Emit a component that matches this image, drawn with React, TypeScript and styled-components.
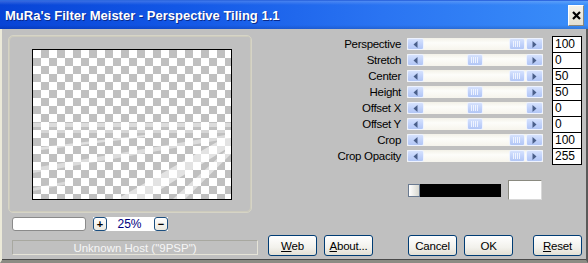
import styled, { createGlobalStyle } from 'styled-components';

const GlobalStyle = createGlobalStyle`
  html, body {
    margin: 0;
    padding: 0;
    background: #c0c0c0;
  }
  body {
    font-family: 'Liberation Sans', Arial, sans-serif;
    font-size: 11px;
  }
`;

const Window = styled.div`
  width: 588px;
  height: 263px;
  display: flex;
  flex-direction: column;
  overflow: hidden;
  background: #c0c0c0;
`;

const TitleBar = styled.div`
  height: 29px;
  flex: none;
  display: flex;
  align-items: center;
  padding: 0 4px 0 5px;
  box-sizing: border-box;
  background:
    linear-gradient(to bottom, rgba(255, 255, 255, 0.18) 0, rgba(255, 255, 255, 0) 4px,
      rgba(0, 0, 0, 0) 24px, rgba(0, 0, 40, 0.15) 100%),
    linear-gradient(to right, #0844d6 0%, #1257e6 30%, #2a74f2 65%, #3a8ef9 100%);
  border-top: 1px solid #2f69e0;
`;

const Title = styled.span`
  flex: 1;
  color: #fff;
  font-weight: bold;
  font-size: 13px;
  text-shadow: 1px 1px 0 #0a2a8a;
  white-space: nowrap;
`;

const CloseButton = styled.div`
  width: 16px;
  height: 21px;
  box-sizing: border-box;
  display: flex;
  align-items: center;
  justify-content: center;
  background: linear-gradient(#f4f2ea, #e3e0d2);
  border: 1px solid #fff;
  border-right-color: #8a877a;
  border-bottom-color: #8a877a;
  svg {
    display: block;
  }
`;

const Body = styled.div`
  flex: 1;
  display: flex;
  gap: 10px;
  padding: 6px 4px 4px 6px;
  border-left: 2px solid #ecead9;
  border-right: 2px solid #5a5a5a;
  border-bottom: 3px solid #8c8c84;
  box-shadow: inset 0 -1px 0 #4a4a4a;
`;

const LeftColumn = styled.div`
  width: 250px;
  display: flex;
  flex-direction: column;
`;

const PreviewFrame = styled.div`
  width: 244px;
  height: 178px;
  box-sizing: border-box;
  border: 1px solid #d6d4c6;
  border-radius: 5px;
  box-shadow: inset 1px 1px 0 #cdcbbd, inset -1px -1px 0 #cdcbbd;
  padding: 13px 0 0 23px;
`;

const Checker = styled.div`
  position: relative;
  width: 200px;
  height: 151px;
  box-sizing: border-box;
  border: 1px solid #000;
  background: conic-gradient(#c0c0c0 25%, #fff 0 50%, #c0c0c0 0 75%, #fff 0) 0 0 / 16px 16px;
  svg {
    position: absolute;
    left: 0;
    top: 0;
  }
`;

const ZoomRow = styled.div`
  margin-top: 4px;
  margin-left: 4px;
  display: flex;
  align-items: center;
  height: 14px;
`;

const NameField = styled.div`
  width: 74px;
  height: 14px;
  box-sizing: border-box;
  background: #fff;
  border: 1px solid #8a8a8a;
  border-radius: 3px;
`;

const ZoomBox = styled.div`
  margin-left: 7px;
  width: 75px;
  height: 14px;
  background: #fff;
  display: flex;
  align-items: center;
`;

const TinyButton = styled.div`
  width: 14px;
  height: 14px;
  box-sizing: border-box;
  border: 1px solid #1c4f80;
  border-radius: 3px;
  background: linear-gradient(#fff, #ebe9df);
  display: flex;
  align-items: center;
  justify-content: center;
  font-weight: bold;
  font-size: 11px;
  line-height: 1;
  color: #000;
`;

const ZoomValue = styled.span`
  flex: 1;
  text-align: center;
  color: #000080;
  font-size: 12px;
  padding-right: 2px;
`;

const Status = styled.div`
  margin-top: 9px;
  margin-left: 4px;
  width: 246px;
  height: 15px;
  box-sizing: border-box;
  border: 1px solid #e6e4d8;
  border-top-color: #a8a8a0;
  border-left-color: #a8a8a0;
  color: #f6f6f6;
  font-size: 11.5px;
  display: flex;
  align-items: center;
  justify-content: center;
`;

const RightColumn = styled.div`
  width: 314px;
  display: flex;
  flex-direction: column;
`;

const Sliders = styled.div`
  margin-top: 1px;
  display: flex;
  flex-direction: column;
`;

const SliderRow = styled.div`
  height: 16px;
  display: flex;
  align-items: center;
`;

const Label = styled.span`
  width: 133px;
  text-align: right;
  font-size: 11.5px;
  letter-spacing: -0.3px;
  color: #000;
  margin-right: 6px;
  white-space: nowrap;
`;

const Track = styled.div<{ $pos: 'mid' | 'end' }>`
  width: 136px;
  height: 12px;
  display: flex;
  background: linear-gradient(#f3f1e8, #fdfdfa 40%, #f6f4ec);
  .inner {
    flex: 1;
    display: flex;
    justify-content: ${(p) => (p.$pos === 'end' ? 'flex-end' : 'center')};
    padding-right: ${(p) => (p.$pos === 'end' ? '1px' : '0')};
  }
`;

const ScrollPart = styled.div<{ $w: number }>`
  width: ${(p) => p.$w}px;
  height: 12px;
  box-sizing: border-box;
  border: 1px solid #eef3ff;
  border-radius: 2px;
  background: linear-gradient(#d6e2fd, #c2d3fb 50%, #b2c6f5);
  display: flex;
  align-items: center;
  justify-content: center;
`;

const ValueBox = styled.div`
  margin-left: 9px;
  width: 30px;
  height: 17px;
  align-self: flex-start;
  box-sizing: border-box;
  border: 1px solid #000;
  background: #fff;
  font-size: 12px;
  line-height: 15px;
  padding-left: 2px;
  margin-bottom: -1px;
`;

const ColorRow = styled.div`
  margin-top: 16px;
  margin-left: 140px;
  display: flex;
  align-items: center;
  height: 20px;
`;

const Gradient = styled.div`
  width: 93px;
  height: 13px;
  background: #000;
  display: flex;
`;

const GradientStop = styled.div`
  width: 12px;
  height: 13px;
  box-sizing: border-box;
  border: 1px solid #6a7a90;
  background: linear-gradient(to right, #fff, #d8d8d0);
`;

const Swatch = styled.div`
  margin-left: 7px;
  width: 34px;
  height: 20px;
  box-sizing: border-box;
  background: #fff;
  border: 1px solid #d8d8d8;
  border-top-color: #8a8a80;
  border-left-color: #8a8a80;
`;

const Buttons = styled.div`
  margin-top: auto;
  display: flex;
  gap: 7px;
`;

const Button = styled.div<{ $gap?: number }>`
  width: 50px;
  height: 21px;
  margin-left: ${(p) => p.$gap ?? 0}px;
  box-sizing: border-box;
  border: 1px solid #003c74;
  border-radius: 3px;
  background: linear-gradient(#ffffff, #f2f1ec 60%, #e2dfd4);
  display: flex;
  align-items: center;
  justify-content: center;
  font-size: 11.5px;
  letter-spacing: -0.2px;
  color: #000;
  u {
    text-decoration: underline;
  }
`;

const Tri = ({ dir }: { dir: 'l' | 'r' }) => (
  <svg width="5" height="7" viewBox="0 0 5 7">
    <path d={dir === 'l' ? 'M4.5 0 L0.5 3.5 L4.5 7 Z' : 'M0.5 0 L4.5 3.5 L0.5 7 Z'} fill="#4a5f8a" />
  </svg>
);

const Grip = () => (
  <svg width="8" height="6" viewBox="0 0 8 6">
    {[0, 2, 4, 6].map((x) => (
      <rect key={x} x={x} y="0" width="1" height="6" fill="#eef3ff" />
    ))}
  </svg>
);

const sliders: { label: string; value: string; pos: 'mid' | 'end' }[] = [
  { label: 'Perspective', value: '100', pos: 'end' },
  { label: 'Stretch', value: '0', pos: 'mid' },
  { label: 'Center', value: '50', pos: 'end' },
  { label: 'Height', value: '50', pos: 'mid' },
  { label: 'Offset X', value: '0', pos: 'mid' },
  { label: 'Offset Y', value: '0', pos: 'mid' },
  { label: 'Crop', value: '100', pos: 'end' },
  { label: 'Crop Opacity', value: '255', pos: 'end' },
];

function PreviewStreaks() {
  return (
    <svg width="198" height="149" viewBox="0 0 198 149">
      <rect x="0" y="73" width="198" height="4" fill="#fff" opacity="0.45" />
      <rect x="0" y="80" width="198" height="3" fill="#fff" opacity="0.35" />
      <path d="M0 98 L120 84 L120 86 L0 101 Z" fill="#fff" opacity="0.5" />
      <path d="M0 118 L198 84 L198 88 L0 123 Z" fill="#fff" opacity="0.45" />
      <path d="M84 149 L112 149 L198 96 L198 84 Z" fill="#fff" opacity="0.55" />
      <path d="M140 149 L152 149 L198 104 L198 96 Z" fill="#fff" opacity="0.5" />
      <path d="M0 138 L40 130 L40 133 L0 141 Z" fill="#fff" opacity="0.4" />
    </svg>
  );
}

export default function App() {
  return (
    <>
      <GlobalStyle />
      <Window>
        <TitleBar>
          <Title>MuRa's Filter Meister - Perspective Tiling 1.1</Title>
          <CloseButton>
            <svg width="9" height="9" viewBox="0 0 9 9">
              <path d="M1 1 L8 8 M8 1 L1 8" stroke="#000" strokeWidth="2.2" />
            </svg>
          </CloseButton>
        </TitleBar>
        <Body>
          <LeftColumn>
            <PreviewFrame>
              <Checker>
                <PreviewStreaks />
              </Checker>
            </PreviewFrame>
            <ZoomRow>
              <NameField />
              <ZoomBox>
                <TinyButton>+</TinyButton>
                <ZoomValue>25%</ZoomValue>
                <TinyButton>−</TinyButton>
              </ZoomBox>
            </ZoomRow>
            <Status>Unknown Host ("9PSP")</Status>
          </LeftColumn>
          <RightColumn>
            <Sliders>
              {sliders.map((s) => (
                <SliderRow key={s.label}>
                  <Label>{s.label}</Label>
                  <Track $pos={s.pos}>
                    <ScrollPart $w={17}>
                      <Tri dir="l" />
                    </ScrollPart>
                    <div className="inner">
                      <ScrollPart $w={16}>
                        <Grip />
                      </ScrollPart>
                    </div>
                    <ScrollPart $w={17}>
                      <Tri dir="r" />
                    </ScrollPart>
                  </Track>
                  <ValueBox>{s.value}</ValueBox>
                </SliderRow>
              ))}
            </Sliders>
            <ColorRow>
              <Gradient>
                <GradientStop />
              </Gradient>
              <Swatch />
            </ColorRow>
            <Buttons>
              <Button>
                <span><u>W</u>eb</span>
              </Button>
              <Button>
                <span><u>A</u>bout...</span>
              </Button>
              <Button $gap={28}>Cancel</Button>
              <Button>OK</Button>
              <Button $gap={13}>
                <span><u>R</u>eset</span>
              </Button>
            </Buttons>
          </RightColumn>
        </Body>
      </Window>
    </>
  );
}
